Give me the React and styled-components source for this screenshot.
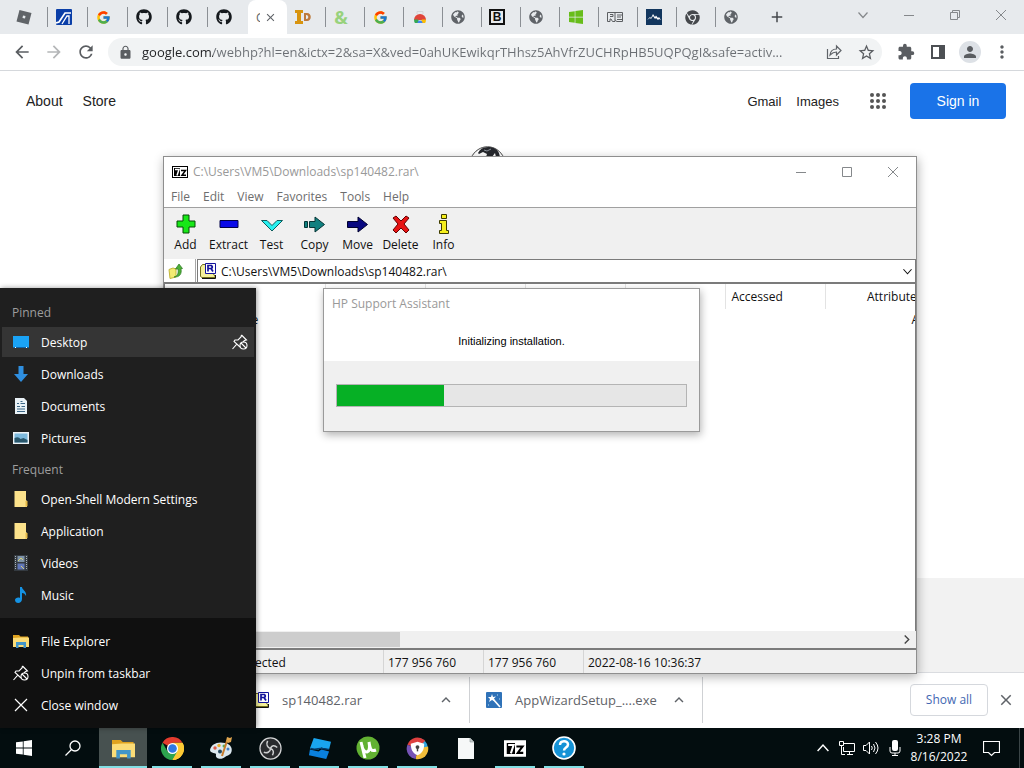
import React from 'react'
import styled, { createGlobalStyle } from 'styled-components'
import { FaGithub, FaChrome, FaWindows, FaGlobeAmericas } from 'react-icons/fa'
import { FcGoogle } from 'react-icons/fc'
import {
    MdArrowBack, MdArrowForward, MdRefresh, MdLock, MdStarBorder, MdExtension,
    MdPerson, MdMoreVert, MdClose, MdAdd, MdExpandLess
} from 'react-icons/md'

const uiFont = '"Open Sans", "Noto Sans", sans-serif'
const arial = '"Liberation Sans", Arial, sans-serif'

const GlobalStyle = createGlobalStyle`
    * {
        box-sizing: border-box;
    }
    body {
        margin: 0;
        font-family: ${uiFont};
        font-size: 12px;
        color: #111;
    }
    button, input, select {
        font: inherit;
        color: inherit;
        margin: 0;
        padding: 0;
        border: 0;
        background: none;
    }
    svg {
        display: block;
        flex: none;
    }
    a {
        color: inherit;
        text-decoration: none;
    }
`

const Screen = styled.div`
    position: relative;
    display: flex;
    flex-direction: column;
    min-height: 100vh;
    overflow: hidden;
    background: #fff;
`

/* ---------- browser ---------- */

const Browser = styled.div`
    flex: 1;
    display: flex;
    flex-direction: column;
`

const TabStrip = styled.div`
    display: flex;
    height: 34px;
    padding-left: 8px;
    background: #e7eaed;
`

const Tab = styled.button`
    display: flex;
    align-items: center;
    gap: ${p => (p.$active ? 4 : 6)}px;
    width: ${p => (p.$wide ? 40 : 39)}px;
    overflow: hidden;
    color: #5f6368;
    background: ${p => (p.$active ? '#fff' : 'none')};
    border-radius: ${p => (p.$active ? '8px 8px 0 0' : '0')};

    &::after {
        content: '';
        width: 1px;
        height: 20px;
        margin-left: auto;
        background: ${p => (p.$divider ? '#8b8f94' : 'transparent')};
    }
    & > svg:first-child {
        margin-left: 8px;
    }
`

const ClippedTitle = styled.span`
    width: 4px;
    margin-left: 8px;
    overflow: hidden;
    white-space: nowrap;
`

const NewTab = styled.button`
    width: 44px;
    display: flex;
    align-items: center;
    justify-content: center;
    color: #45484c;
`

const CaptionButtons = styled.div`
    display: flex;
    margin-left: auto;
    color: #85888b;
`

const CaptionButton = styled.button`
    display: flex;
    align-items: center;
    justify-content: center;
    width: 46px;
    height: 29px;
`

const Toolbar = styled.div`
    display: flex;
    align-items: center;
    height: 37px;
    padding: 0 6px;
    border-bottom: 1px solid #d5d8dc;
    background: #fff;
    color: #5a5d61;
`

const ToolButton = styled.button`
    display: flex;
    align-items: center;
    justify-content: center;
    width: 32px;
    height: 28px;
    opacity: ${p => (p.disabled ? 0.45 : 1)};
`

const Omnibox = styled.label`
    flex: 1;
    display: flex;
    align-items: center;
    min-width: 0;
    height: 28px;
    margin: 0 8px 0 6px;
    padding-left: 10px;
    border-radius: 14px;
    background: #f1f3f4;
`

const Address = styled.input`
    flex: 1;
    min-width: 0;
    margin-left: 9px;
    font-size: 13px;
    outline: 0;
    color: transparent;
    background: linear-gradient(90deg, #202124 71px, #6b6f74 71px);
    background-clip: text;
    text-overflow: ellipsis;
`

const Avatar = styled.span`
    display: flex;
    align-items: center;
    justify-content: center;
    width: 22px;
    height: 22px;
    border-radius: 50%;
    background: #dde1e6;
`

const Page = styled.main`
    flex: 1;
    display: flex;
    flex-direction: column;
    justify-content: space-between;
    font-family: ${arial};
    font-size: 14px;
    color: #222;
`

const PageNav = styled.nav`
    display: flex;
    align-items: center;
    gap: 20px;
    padding: 12px 18px 0 26px;
`

const NavRight = styled.div`
    display: flex;
    align-items: center;
    gap: 15px;
    margin-left: auto;
    font-size: 13px;
`

const AppsButton = styled.button`
    margin: 0 8px 0 15px;
`

const SignIn = styled.a`
    min-width: 96px;
    text-align: center;
    line-height: 36px;
    border-radius: 4px;
    background: #1a73e8;
    color: #fff;
    font-size: 14px;
`

const Doodle = styled.svg`
    position: absolute;
    left: 470px;
    top: 146px;
`

const PageFooter = styled.footer`
    height: 94px;
    background: #f2f2f2;
`

const Downloads = styled.div`
    display: flex;
    align-items: center;
    height: 56px;
    padding: 0 9px 2px 237px;
    border-top: 1px solid #dadce0;
    background: #fff;
    font-size: 13px;
    color: #5f6368;
`

const DownloadItem = styled.button`
    display: flex;
    align-items: center;
    width: 233px;
    height: 46px;
    padding: 0 14px 0 16px;
    border-right: 1px solid #cfd1d4;
`

const DownloadName = styled.span`
    margin: 0 auto 0 13px;
`

const ShowAll = styled.button`
    width: 78px;
    height: 32px;
    margin-left: auto;
    border: 1px solid #d5d8dd;
    border-radius: 4px;
    font-size: 12px;
    font-weight: 500;
    color: #4267b2;
`

const CloseBar = styled.button`
    margin-left: 9px;
`

/* ---------- archive window ---------- */

const ArchiveWindow = styled.section`
    position: absolute;
    left: 163px;
    top: 156px;
    width: 754px;
    height: 518px;
    display: flex;
    flex-direction: column;
    border: 1px solid #8e8e8e;
    background: #fff;
    box-shadow: 1px 3px 10px rgba(0, 0, 0, 0.3);
`

const TitleBar = styled.header`
    display: flex;
    align-items: center;
    height: 29px;
    padding-left: 8px;
    color: #999;
`

const TitleText = styled.span`
    margin-left: 5px;
`

const MenuBar = styled.div`
    display: flex;
    gap: 13px;
    height: 22px;
    padding-left: 7px;
    border-bottom: 1px solid #a0a0a0;
    color: #6d6d6d;
    line-height: 22px;
`

const ActionBar = styled.div`
    display: flex;
    height: 51px;
    background: #f0f0f0;
`

const Action = styled.button`
    display: flex;
    flex-direction: column;
    align-items: center;
    gap: 1px;
    width: 43px;
    padding-top: 6px;
    line-height: 18px;
`

const PathRow = styled.div`
    display: flex;
    height: 25px;
    border-bottom: 2px solid #7b7b7b;
`

const UpButton = styled.button`
    display: flex;
    align-items: center;
    width: 32px;
    padding-left: 4px;
    border-right: 1px solid #a8a8a8;
`

const PathBox = styled.div`
    flex: 1;
    display: flex;
    align-items: center;
    margin-left: 1px;
    padding: 0 3px 0 2px;
    border: 1px solid #7b7b7b;
    border-bottom: 0;
`

const PathSelect = styled.select`
    flex: 1;
    margin-left: 5px;
    appearance: none;
    outline: 0;
`

const ListArea = styled.div`
    flex: 1;
    overflow: hidden;
    border-left: 1px solid #7b7b7b;
    border-right: 1px solid #7b7b7b;
`

const FileTable = styled.table`
    width: 760px;
    table-layout: fixed;
    border-collapse: collapse;

    th, td {
        padding: 0 6px;
        text-align: left;
        font-weight: 400;
        white-space: nowrap;
    }
    th {
        height: 25px;
        border-right: 1px solid #e3e3e3;
    }
    td {
        height: 20px;
    }
    td:first-child {
        padding-left: 0;
    }
    th:last-child, td:last-child {
        text-align: right;
    }
    th:last-child {
        padding-right: 2px;
    }
`

const FileName = styled.span`
    display: flex;
    align-items: center;
`

const ScrollTrack = styled.div`
    display: flex;
    justify-content: space-between;
    align-items: center;
    height: 17px;
    padding-right: 5px;
    background: #f0f0f0;
    color: #444;
`

const ScrollThumb = styled.div`
    width: 236px;
    height: 15px;
    background: #cdcdcd;
`

const StatusBar = styled.footer`
    display: flex;
    height: 25px;
    border-top: 2px solid #7b7b7b;
    background: #f0f0f0;
    line-height: 25px;
`

const StatusCell = styled.span`
    width: ${p => p.$width || 100}px;
    padding-left: 4px;
    border-right: ${p => (p.$last ? '0' : '1px solid #d5d5d5')};
    white-space: nowrap;
`

/* ---------- installer dialog ---------- */

const Dialog = styled.section`
    position: absolute;
    left: 323px;
    top: 288px;
    width: 377px;
    height: 144px;
    display: flex;
    flex-direction: column;
    border: 1px solid #9a9a9a;
    background: #f0f0f0;
    box-shadow: 1px 3px 8px rgba(0, 0, 0, 0.3);
`

const DialogTop = styled.div`
    height: 72px;
    background: #fff;
`

const DialogTitle = styled.h2`
    margin: 0;
    padding-left: 8px;
    font-size: 12px;
    font-weight: 400;
    line-height: 30px;
    color: #999;
`

const DialogMessage = styled.label`
    display: block;
    text-align: center;
    font-family: ${arial};
    font-size: 11px;
    line-height: 44px;
    color: #000;
`

const Progress = styled.progress`
    appearance: none;
    width: calc(100% - 24px);
    height: 23px;
    margin: 23px 12px 0;
    border: 1px solid #b4b4b4;

    &::-webkit-progress-bar {
        background: #e6e6e6;
    }
    &::-webkit-progress-value {
        background: #06b025;
    }
`

/* ---------- jump list ---------- */

const JumpList = styled.aside`
    position: absolute;
    left: 0;
    bottom: 40px;
    width: 256px;
    background: #1f1f1f;
    color: #fff;
    box-shadow: 1px 0 5px rgba(0, 0, 0, 0.4);
`

const JumpSection = styled.div`
    padding: 8px 2px 6px;
    background: ${p => (p.$tasks ? '#101010' : 'none')};
`

const JumpLabel = styled.div`
    height: 28px;
    margin-top: 3px;
    padding-left: 10px;
    line-height: 28px;
    color: #9d9d9d;
`

const JumpRow = styled.div`
    display: flex;
    align-items: center;
    height: 30px;
    margin-bottom: 2px;
    background: ${p => (p.$hot ? '#353535' : 'none')};
`

const JumpLink = styled.button`
    flex: 1;
    display: flex;
    align-items: center;
    gap: 12px;
    height: 30px;
    padding-left: 11px;
    text-align: left;
`

const PinButton = styled.button`
    padding: 0 6px;
`

/* ---------- taskbar ---------- */

const Taskbar = styled.footer`
    display: flex;
    height: 40px;
    background: #030d0f;
    color: #fff;
`

const TaskButtons = styled.div`
    display: flex;
    gap: 1px;
`

const RunningApps = styled.div`
    display: flex;
    gap: 1px;
    margin-left: 1px;
`

const TaskButton = styled.button`
    display: flex;
    align-items: center;
    justify-content: center;
    width: 48px;
    height: 40px;
    background: ${p => (p.$active ? '#475150' : 'none')};
    background-image: ${p => (p.$running ? 'linear-gradient(#82dfe4, #82dfe4)' : 'none')};
    background-size: ${p => (p.$active ? '48px' : '40px')} 2px;
    background-position: center bottom;
    background-repeat: no-repeat;
`

const Tray = styled.div`
    display: flex;
    align-items: center;
    margin-left: auto;
    padding-right: 4px;
`

const TrayButton = styled.button`
    display: flex;
    align-items: center;
    justify-content: center;
    width: 24px;
    height: 40px;
`

const Clock = styled.time`
    width: 64px;
    text-align: center;
    line-height: 18px;
`

const NoticeButton = styled(TrayButton)`
    width: 49px;
    padding-right: 8px;
    border-right: 1px solid #3b4547;
`

/* ---------- drawings ---------- */

const Svg = ({ size = 16, w, h, box = '0 0 16 16', children, ...rest }) => (
    <svg width={w || size} height={h || size} viewBox={box} fill="none" aria-hidden="true" {...rest}>{children}</svg>
)

const RobloxIcon = () => (
    <Svg><path fill="#606468" fillRule="evenodd" d="M3.500 1 15.500 4 12.500 15.500.5 12.500ZM7 6.500 6.500 9 9 9.500 9.500 7Z" /></Svg>
)

const BlueIcon = () => (
    <Svg>
        <rect width="16" height="16" rx="1" fill="#0b3fa8" />
        <path d="M0 14 3 13 9 4h6" stroke="#fff" strokeWidth="1.700" />
        <path d="m6 15 5-8h2v8" stroke="#fff" strokeWidth="1.300" />
    </Svg>
)

const InfoDIcon = () => (
    <Svg>
        <path d="M0 1h8v3H6v8h2v3H0v-3h2V4H0Z" fill="#d8940f" />
        <path d="M9 4h3c5 0 5 8 0 8H9ZM11 6v4c3 .5 3-4.500 0-4Z" fill="#bd7a3c" fillRule="evenodd" />
    </Svg>
)

const Ampersand = styled.span`
    width: 16px;
    margin-left: 7px;
    font: 700 18px/20px ${uiFont};
    color: #98d27c;
`

const StoreIcon = () => (
    <Svg>
        <path d="M5 5V2.500h6V5" stroke="#d4d6d8" />
        <path d="M2 11a6 6 0 0 1 12 0Z" fill="#e0453a" />
        <path d="M2 10.500h4l2 3.500H3Q2 13 2 10.500Z" fill="#34a853" />
        <path d="M14 10.500h-4L8 14h5q1-1 1-3.500Z" fill="#fbbc05" />
        <path d="M5.500 14a2.500 2.500 0 0 1 5 0Z" fill="#4285f4" />
    </Svg>
)

const BoldBox = styled.span`
    width: 16px;
    height: 16px;
    margin-left: 7px;
    border: 2px solid #111;
    font: 700 12px/12px ${arial};
    text-align: center;
    color: #111;
`

const ReIcon = () => (
    <Svg>
        <path d="M.5 3.500h15v9H9.500L8 10.500v2H5.500L4 10H3v2.500H.5ZM3 5.500h3v2H3M8 3.500v7M10 6h5M10 8h4M10 10.500h5" stroke="#5c5f62" />
    </Svg>
)

const MountainIcon = () => (
    <Svg>
        <rect width="16" height="16" fill="#12365e" />
        <path d="m1 11 3-3 1 1 2-4 2 3 1-1.500L12 9l1-1 2 3-2-1-1 1-2-2-1 1-2-3-2 3-1-1Z" fill="#fff" />
    </Svg>
)

const ShareIcon = () => (
    <Svg><path d="M1.500 5v9.500h11V12M4 11c.5-4 3-6 6.500-6V2l4.500 4.500L10.500 11V8C8 8 6 9 4 11Z" stroke="#5f6368" strokeWidth="1.200" /></Svg>
)

const PanelIcon = () => (
    <Svg><path fill="#4d5054" fillRule="evenodd" d="M1 1h14v14H1ZM3 3v10h6V3Z" /></Svg>
)

const GridDots = () => (
    <Svg size={18} box="0 0 18 18">
        {[3, 9, 15].map(y => [3, 9, 15].map(x => <circle key={`${x}-${y}`} cx={x} cy={y} r="2" fill="#555" />))}
    </Svg>
)

const MinimizeIcon = () => <Svg size={10} box="0 0 10 10"><path d="M0 5.500h10" stroke="currentColor" /></Svg>
const MaximizeIcon = () => <Svg size={10} box="0 0 10 10"><path d="M.5.5h9v9h-9Z" stroke="currentColor" /></Svg>
const RestoreIcon = () => <Svg size={10} box="0 0 10 10"><path d="M.5 2.500h7v7h-7ZM2.500 2.500v-2h7v7h-2" stroke="currentColor" /></Svg>
const CrossIcon = ({ size = 10 }) => <Svg size={size} box="0 0 10 10"><path d="m0 0 10 10M10 0 0 10" stroke="currentColor" /></Svg>
const ChevronIcon = ({ up, size = 10 }) => (
    <Svg size={size} box="0 0 10 10"><path d={up ? 'm.5 7.500 4.500-5 4.500 5' : 'm.5 2.500 4.500 5 4.500-5'} stroke="currentColor" strokeWidth="1.200" /></Svg>
)

const SevenZipIcon = ({ dark, w = 16, h = 12 }) => (
    <Svg w={w} h={h} box="0 0 16 12">
        <rect x=".5" y=".5" width="15" height="11" fill="#fff" stroke={dark ? '#fff' : '#000'} />
        <path d="M2 2h6v8H2Z" fill="#000" />
        <path d="M3 3.500h4L5 9.500" stroke="#fff" strokeWidth="1.500" />
        <path d="M9 4.500h4.500L10 9.200h4" stroke="#000" strokeWidth="1.500" />
    </Svg>
)

const RarIcon = () => (
    <Svg>
        <path d="M.5 13.500V4l2-2.500H8L15 13.500v1H2Z" fill="#f5f19c" stroke="#716f1b" />
        <path d="M2 15.500h13.500V12" stroke="#111" />
        <path d="M5.500.5h10v10h-10Z" fill="#fff" stroke="#14149c" />
        <path d="M8 8.500v-6h3.500q1.500 1.500 0 3H8M11 5.500l2 3" stroke="#14149c" strokeWidth="1.700" />
    </Svg>
)

const UpFolderIcon = () => (
    <Svg>
        <path d="M1 6.500 5 5l3 1v8l-6 1.500Z" fill="#f3eb72" stroke="#c2b73c" />
        <path d="M6 14c4-1 4.500-4 4-8H7.500L11 1l3.500 4.500H13c1 5-1 9-7 8.500Z" fill="#4dae38" stroke="#2b7a20" strokeWidth=".7" />
    </Svg>
)

const actionIcons = {
    Add: <path d="M9 1h6v6h6v6h-6v6H9v-6H3V7h6Z" fill="#17e817" stroke="#064b06" />,
    Extract: <path d="M3 6.500h18v7H3Z" fill="#0a0ae8" stroke="#000048" />,
    Test: <path d="M1.500 6.500H7l5 5 5-5h5.500L12 17Z" fill="#27f0f0" stroke="#0b5c5c" />,
    Copy: <path d="M1.500 7.500h3v6h-3ZM6.500 7.500H12V3l9.500 7.500L12 18v-4.500H6.500Z" fill="#108080" stroke="#053535" />,
    Move: <path d="M1.500 7.500H12V3l9.500 7.500L12 18v-4.500H1.500Z" fill="#080880" stroke="#00002e" />,
    Delete: <path d="m4 4 3-2 5 5 5-5 3 2-5 6 5 6-3 3-5-5-5 5-3-3 5-6Z" fill="#e71313" stroke="#620000" />,
    Info: <path d="M9.500.5h5v4h-5ZM7.500 6.500h7v10h2v3h-9v-3h2v-7h-2Z" fill="#f6ef1d" stroke="#3d3b00" />
}

const DesktopIcon = () => (
    <Svg>
        <path d="M0 2h16v12H0Z" fill="#1aa3f6" />
        <path d="M0 13h16v1H0Z" fill="#0b62a8" />
        <path d="M2 13.500h1M13 13.500h1" stroke="#fff" />
    </Svg>
)
const DownIcon = () => <Svg><path d="M5.500 0h5v8H15l-7 8-7-8h4.500Z" fill="#2f8fe0" /></Svg>
const DocumentIcon = () => (
    <Svg>
        <path d="M2 0h9l3 3v13H2Z" fill="#e9f1f6" />
        <path d="M4 5.500h2M7.500 3.500h2M7.500 5.500H12M4 8.500h3M8.500 8.500H12M4 11h8M4 13.500h8" stroke="#3b6685" />
    </Svg>
)
const PictureIcon = () => (
    <Svg>
        <path d="M0 2h16v12H0Z" fill="#edf2f5" />
        <path d="M1.500 3.500h13v9h-13Z" fill="#7db9dd" />
        <path d="M1.500 8q4-2 6 1l3-1 4 2v2.500h-13Z" fill="#29566b" />
    </Svg>
)
const FolderIcon = () => (
    <Svg>
        <path d="M1.500 0H13v9l1 1v6H1.500Z" fill="#fce28b" />
        <path d="M12.500 10h2v5l-2 1Z" fill="#e5b946" />
    </Svg>
)
const VideoIcon = () => (
    <Svg>
        <path d="M1 0h14v16H1Z" fill="#343a40" />
        <path d="M2.500 1v14M13.500 1v14" stroke="#aab3ba" strokeDasharray="1 1" />
        <path d="M4.500 1h7v6h-7Z" fill="#7e93a8" />
        <path d="M4.500 8.500h7v6h-7Z" fill="#6177b8" />
        <path d="M5 6l3-3 2 2M8 11l3 3" stroke="#d6cf76" />
    </Svg>
)
const MusicIcon = () => (
    <Svg><path d="M7 0h2c0 3 5 4 4 9-1-2-2-3-4-3v6c0 5-7 5-7 1 0-2 3-3 5-2Z" fill="#1593e4" /></Svg>
)
const ExplorerIcon = ({ size = 16 }) => (
    <Svg size={size}>
        <path d="M0 2h6l1.500 1.500H15V6H0Z" fill="#dfa21f" />
        <path d="M0 5 7 4.500h9V14H0Z" fill="#fbdc77" />
        <path d="M3 9h10v6h-2.500v-3h-5v3H3Z" fill="#4295c8" />
    </Svg>
)
const UnpinIcon = () => (
    <Svg>
        <path d="m9.500 1 5 5-2 .5-1.500 1.500M9.500 1 9 3 6 6 3 6l-1 1.500L8 13M4.800 10.200.5 15" stroke="#fff" strokeWidth="1.100" />
        <circle cx="11.500" cy="11.500" r="3.500" stroke="#fff" strokeWidth="1.100" />
        <path d="m9 9 5 5" stroke="#fff" strokeWidth="1.100" />
    </Svg>
)

const WizardIcon = () => (
    <Svg>
        <rect width="16" height="16" rx="1" fill="#2f72b8" />
        <path d="m7 7 7 8" stroke="#fff" strokeWidth="1.700" />
        <path d="m6 2 1 3 3-.5-2 2 1 3-3-1.500L3 10l1-3-2-2h3Z" fill="#fff" />
        <path d="M11 3h1M13 7h1M2 13h1" stroke="#bde" />
    </Svg>
)

const SearchIcon = () => (
    <Svg><circle cx="10" cy="6" r="5" stroke="#fff" strokeWidth="1.300" /><path d="M6.500 9.500.5 15.500" stroke="#fff" strokeWidth="1.300" /></Svg>
)
const WindowsIcon = () => (
    <Svg><path fill="#fff" d="M0 2.300 6.800 1.400v6.200H0ZM7.600 1.300 16 0v7.600H7.600ZM0 8.400h6.800v6.200L0 13.700ZM7.600 8.400H16V16l-8.400-1.300Z" /></Svg>
)
const ChromeIcon = () => (
    <Svg size={23} box="0 0 24 24">
        <path d="M12 12 1.600 6A12 12 0 0 1 22.400 6H12Z" fill="#e33b2e" />
        <path d="M12 12 22.400 6A12 12 0 0 1 12 24Z" fill="#fcc934" />
        <path d="M17.200 15 12 24A12 12 0 0 1 1.600 6L6.800 15Z" fill="#2da44e" />
        <path d="M12 6h10.400A12 12 0 0 1 12 24l5.200-9Z" fill="#fcc934" />
        <circle cx="12" cy="12" r="5.800" fill="#fff" />
        <circle cx="12" cy="12" r="4.500" fill="#2f78e4" />
    </Svg>
)
const PaintIcon = () => (
    <Svg size={24} box="0 0 24 24">
        <path d="M1 14C2 8 9 5 16 7c6 1 8 6 6 10-2 3-4 2-6 4-3 3-10 2-9-2 1-3-6-1-6-5Z" fill="#dce8ef" />
        <circle cx="6" cy="12" r="1.700" fill="#de5c48" /><circle cx="10" cy="9.500" r="1.700" fill="#e9b033" />
        <circle cx="15" cy="10" r="1.500" fill="#54ad59" /><circle cx="19" cy="13" r="1.500" fill="#4381c9" />
        <circle cx="11" cy="15.500" r="2" fill="#26495e" />
        <path d="m13 20 5-15" stroke="#c87c2c" strokeWidth="2" />
        <path d="m17 5 1-4 3 1 2-1-1 5-3 1Z" fill="#e0a64f" />
    </Svg>
)
const ObsIcon = () => (
    <Svg size={23} box="0 0 24 24">
        <circle cx="12" cy="12" r="11" fill="#292b2e" stroke="#d2d3d4" strokeWidth="1.300" />
        <path d="M9 4c-2 4 0 7 3 8 1-3 4-4 7-1M12 12c0 4-4 5-7 4M12 12c3 1 4 4 2 7" stroke="#cccecf" strokeWidth="1.600" />
    </Svg>
)
const RobloxStudioIcon = () => (
    <Svg size={23} box="0 0 24 24">
        <path d="M6 1 24 5l-2 8-8-2-3 2-9-1Z" fill="#19a5ef" />
        <path d="m2 13 9 2 3-2 8 2-3 8-18-4Z" fill="#0a80dd" />
        <path d="M3 12c6 2 8-1 11 0l8 1" stroke="#053d6e" strokeWidth="1.400" />
    </Svg>
)
const TorrentIcon = () => (
    <Svg size={24} box="0 0 24 24">
        <circle cx="12" cy="12" r="11.500" fill="#62b132" />
        <path d="m5 6 4 16M6 10c1 5 3 6 5 6 3-1 3-4 2-10M13 6c1 7 2 10 7 8" stroke="#fff" strokeWidth="3" />
    </Svg>
)
const ShieldIcon = () => (
    <Svg size={23} box="0 0 24 24">
        <path d="M12 1A11 11 0 0 1 23 12H12Z" fill="#32a4df" />
        <path d="M1.500 8A11 11 0 0 1 20 4L12 12Z" fill="#de403f" />
        <path d="M23 10A11 11 0 0 1 10 23l2-11Z" fill="#f2bd3a" />
        <path d="M10 23A11 11 0 0 1 1.500 8L12 12Z" fill="#7653b5" />
        <path d="m12 5 7 2c0 6-2 10-7 12-5-2-7-6-7-12Z" fill="#fff" />
        <circle cx="12" cy="10.500" r="2" fill="#444" /><path d="M12 11v4" stroke="#444" strokeWidth="1.500" />
    </Svg>
)
const BlankFileIcon = () => (
    <Svg w={16} h={21} box="0 0 16 21">
        <path d="M0 0h12l4 4v17H0Z" fill="#f6f8f8" /><path d="M12 0v4h4" fill="#c4cbcc" stroke="#8b9394" strokeWidth=".6" />
    </Svg>
)
const HelpIcon = () => (
    <Svg size={24} box="0 0 24 24">
        <circle cx="12" cy="12" r="11" fill="#1592d6" stroke="#fff" strokeWidth="1.600" />
        <path d="M8 9c0-5 8-5 8-.5 0 3-4 3-4 6" stroke="#fff" strokeWidth="2.500" /><circle cx="12" cy="18" r="1.600" fill="#fff" />
    </Svg>
)

const NetworkIcon = () => (
    <Svg><path d="M5 3.500h10.500v8H4.500V7M8 14.500h6M10.500 11.500v3M.5 1.500h4v4h-4ZM2.500 5.500v9H6" stroke="#fff" /></Svg>
)
const SoundIcon = () => (
    <Svg><path d="M.5 5.500H3L6.500 2v12L3 10.500H.5ZM8.500 6q1.500 2 0 4M10.500 4q3 4 0 8M12.500 2q5 6 0 12" stroke="#fff" /></Svg>
)
const MicIcon = () => (
    <Svg><rect x="5" width="6" height="11" rx="2" fill="#fff" /><path d="M3 7v4q0 2 2 2h6q2 0 2-2V7M8 13v3M5 15.500h6" stroke="#fff" /></Svg>
)
const NoticeIcon = () => (
    <Svg size={17} box="0 0 17 17"><path d="M.5 1.500h16v11h-5l-3 3-3-3h-5Z" stroke="#fff" strokeWidth="1.200" /></Svg>
)

/* ---------- data ---------- */

const octocat = <FaGithub size={16} color="#15191d" />
const globe = <FaGlobeAmericas size={14} />

const firstTabs = [
    ['Roblox', <RobloxIcon />], ['Dashboard', <BlueIcon />], ['Google', <FcGoogle size={15} />],
    ['GitHub', octocat], ['GitHub', octocat], ['GitHub', octocat]
]

const lastTabs = [
    ['Icons', <InfoDIcon />], ['Ampersand', <Ampersand>&amp;</Ampersand>], ['Google', <FcGoogle size={15} />],
    ['Web Store', <StoreIcon />], ['Site', globe], ['Bold', <BoldBox>B</BoldBox>], ['Site', globe],
    ['Windows', <FaWindows size={16} color="#67bd1a" />], ['RE', <ReIcon />], ['Mountain', <MountainIcon />],
    ['Chrome', <FaChrome size={15} color="#45484c" />], ['Site', globe]
]

const menus = ['File', 'Edit', 'View', 'Favorites', 'Tools', 'Help']

// the columns behind the installer dialog keep their label for screen readers only
const columns = [
    ['Name', false], ['Size', false], ['Packed Size', false], ['Modified', false],
    ['Created', false], ['Accessed', true], ['Attributes', true]
]

const pinned = [['Desktop', <DesktopIcon />], ['Downloads', <DownIcon />], ['Documents', <DocumentIcon />], ['Pictures', <PictureIcon />]]
const frequent = [['Open-Shell Modern Settings', <FolderIcon />], ['Application', <FolderIcon />], ['Videos', <VideoIcon />], ['Music', <MusicIcon />]]
const tasks = [['File Explorer', <ExplorerIcon />], ['Unpin from taskbar', <UnpinIcon />], ['Close window', <Svg><path d="m2 2 12 12M14 2 2 14" stroke="#fff" strokeWidth="1.200" /></Svg>]]

const apps = [
    ['File Explorer', <ExplorerIcon size={23} />, true], ['Google Chrome', <ChromeIcon />, true],
    ['Paint', <PaintIcon />, true], ['OBS Studio', <ObsIcon />, true], ['Roblox Studio', <RobloxStudioIcon />, true],
    ['uTorrent', <TorrentIcon />, true], ['Secure Browser', <ShieldIcon />, true], ['File', <BlankFileIcon />, false],
    ['7-Zip', <SevenZipIcon dark w={22} h={17} />, true], ['Help', <HelpIcon />, true]
]

function BrowserWindow() {
    return (
        <Browser>
            <TabStrip>
                {firstTabs.map(([name, icon], i) => (
                    <Tab key={i} aria-label={name} $wide $divider={i < 5}>{icon}</Tab>
                ))}
                <Tab $active aria-label="Google">
                    <ClippedTitle>G</ClippedTitle>
                    <MdClose size={13} />
                </Tab>
                {lastTabs.map(([name, icon], i) => (
                    <Tab key={i} aria-label={name} $divider={i < 11}>{icon}</Tab>
                ))}
                <NewTab aria-label="New tab"><MdAdd size={18} /></NewTab>
                <CaptionButtons>
                    <CaptionButton aria-label="Search tabs"><ChevronIcon /></CaptionButton>
                    <CaptionButton aria-label="Minimize"><MinimizeIcon /></CaptionButton>
                    <CaptionButton aria-label="Restore"><RestoreIcon /></CaptionButton>
                    <CaptionButton aria-label="Close"><CrossIcon /></CaptionButton>
                </CaptionButtons>
            </TabStrip>
            <Toolbar>
                <ToolButton aria-label="Back"><MdArrowBack size={20} /></ToolButton>
                <ToolButton aria-label="Forward" disabled><MdArrowForward size={20} /></ToolButton>
                <ToolButton aria-label="Reload"><MdRefresh size={20} /></ToolButton>
                <Omnibox>
                    <MdLock size={15} />
                    <Address
                        aria-label="Address"
                        defaultValue="google.com/webhp?hl=en&ictx=2&sa=X&ved=0ahUKEwikqrTHhsz5AhVfrZUCHRpHB5UQPQgI&safe=activ..."
                    />
                    <ToolButton aria-label="Share"><ShareIcon /></ToolButton>
                    <ToolButton aria-label="Bookmark"><MdStarBorder size={19} /></ToolButton>
                </Omnibox>
                <ToolButton aria-label="Extensions"><MdExtension size={18} /></ToolButton>
                <ToolButton aria-label="Side panel"><PanelIcon /></ToolButton>
                <ToolButton aria-label="Profile"><Avatar><MdPerson size={18} /></Avatar></ToolButton>
                <ToolButton aria-label="Menu"><MdMoreVert size={20} /></ToolButton>
            </Toolbar>
            <Page>
                <PageNav>
                    <a href="#about">About</a>
                    <a href="#store">Store</a>
                    <NavRight>
                        <a href="#gmail">Gmail</a>
                        <a href="#images">Images</a>
                        <AppsButton aria-label="Google apps"><GridDots /></AppsButton>
                        <SignIn href="#signin">Sign in</SignIn>
                    </NavRight>
                </PageNav>
                <PageFooter />
            </Page>
            <Doodle width="36" height="20" viewBox="0 0 36 20" aria-hidden="true">
                <path d="M1 12C8-3 27-3 34 12" fill="#fff" stroke="#444" />
                <path d="M8 7Q11 0 20 1q9 1 10 10h-4l-1-4-3 4h-6l1-3-4-2-4 2Z" fill="#26282d" />
                <path d="m14 4 3 1 4-2" stroke="#8b9199" fill="none" />
            </Doodle>
            <Downloads>
                <DownloadItem>
                    <RarIcon />
                    <DownloadName>sp140482.rar</DownloadName>
                    <MdExpandLess size={18} />
                </DownloadItem>
                <DownloadItem>
                    <WizardIcon />
                    <DownloadName>AppWizardSetup_....exe</DownloadName>
                    <MdExpandLess size={18} />
                </DownloadItem>
                <ShowAll>Show all</ShowAll>
                <CloseBar aria-label="Close downloads bar"><MdClose size={18} /></CloseBar>
            </Downloads>
        </Browser>
    )
}

function Archive() {
    return (
        <ArchiveWindow>
            <TitleBar>
                <SevenZipIcon />
                <TitleText>C:\Users\VM5\Downloads\sp140482.rar\</TitleText>
                <CaptionButtons>
                    <CaptionButton aria-label="Minimize"><MinimizeIcon /></CaptionButton>
                    <CaptionButton aria-label="Maximize"><MaximizeIcon /></CaptionButton>
                    <CaptionButton aria-label="Close"><CrossIcon /></CaptionButton>
                </CaptionButtons>
            </TitleBar>
            <MenuBar>
                {menus.map(name => <button key={name}>{name}</button>)}
            </MenuBar>
            <ActionBar>
                {Object.keys(actionIcons).map(name => (
                    <Action key={name}>
                        <Svg w={24} h={21} box="0 0 24 21">{actionIcons[name]}</Svg>
                        {name}
                    </Action>
                ))}
            </ActionBar>
            <PathRow>
                <UpButton aria-label="Up one level"><UpFolderIcon /></UpButton>
                <PathBox>
                    <RarIcon />
                    <PathSelect aria-label="Folder">
                        <option>C:\Users\VM5\Downloads\sp140482.rar\</option>
                    </PathSelect>
                    <ChevronIcon size={9} />
                </PathBox>
            </PathRow>
            <ListArea>
                <FileTable>
                    <colgroup>
                        <col width="160" />
                        {columns.slice(1).map(([name]) => <col key={name} width="100" />)}
                    </colgroup>
                    <thead>
                        <tr>
                            {columns.map(([name, shown]) => <th key={name} aria-label={name}>{shown && name}</th>)}
                        </tr>
                    </thead>
                    <tbody>
                        <tr>
                            <td><FileName><Svg><path d="M1 3h14v10H1Z" fill="#fff" stroke="#777" /></Svg>sp140482.exe</FileName></td>
                            <td /><td /><td /><td /><td />
                            <td>A</td>
                        </tr>
                    </tbody>
                </FileTable>
            </ListArea>
            <ScrollTrack>
                <ScrollThumb />
                <Svg size={9} box="0 0 10 10"><path d="m3 .5 4.500 4.500L3 9.500" stroke="currentColor" strokeWidth="1.500" /></Svg>
            </ScrollTrack>
            <StatusBar>
                <StatusCell $width={220}>1/1 object(s) selected</StatusCell>
                <StatusCell>177 956 760</StatusCell>
                <StatusCell>177 956 760</StatusCell>
                <StatusCell $last>2022-08-16 10:36:37</StatusCell>
            </StatusBar>
        </ArchiveWindow>
    )
}

function Installer() {
    return (
        <Dialog>
            <DialogTop>
                <DialogTitle>HP Support Assistant</DialogTitle>
                <DialogMessage htmlFor="install-progress">Initializing installation.</DialogMessage>
            </DialogTop>
            <Progress id="install-progress" max="350" value="107" />
        </Dialog>
    )
}

const renderJumpItems = (items) => items.map(([name, icon]) => (
    <JumpRow key={name} $hot={name === 'Desktop'}>
        <JumpLink>{icon}{name}</JumpLink>
        {name === 'Desktop' && <PinButton aria-label="Unpin from this list"><UnpinIcon /></PinButton>}
    </JumpRow>
))

function TaskMenu() {
    return (
        <JumpList>
            <JumpSection>
                <JumpLabel>Pinned</JumpLabel>
                {renderJumpItems(pinned)}
                <JumpLabel>Frequent</JumpLabel>
                {renderJumpItems(frequent)}
            </JumpSection>
            <JumpSection $tasks>{renderJumpItems(tasks)}</JumpSection>
        </JumpList>
    )
}

export default function App() {
    return (
        <Screen>
            <GlobalStyle />
            <BrowserWindow />
            <Archive />
            <Installer />
            <TaskMenu />
            <Taskbar>
                <TaskButtons>
                    <TaskButton aria-label="Start"><WindowsIcon /></TaskButton>
                    <TaskButton aria-label="Search"><SearchIcon /></TaskButton>
                    <RunningApps>
                        {apps.map(([name, icon, running], i) => (
                            <TaskButton key={name} aria-label={name} $running={running} $active={i === 0}>{icon}</TaskButton>
                        ))}
                    </RunningApps>
                </TaskButtons>
                <Tray>
                    <TrayButton aria-label="Show hidden icons"><ChevronIcon up size={12} /></TrayButton>
                    <TrayButton aria-label="Network"><NetworkIcon /></TrayButton>
                    <TrayButton aria-label="Volume"><SoundIcon /></TrayButton>
                    <TrayButton aria-label="Microphone"><MicIcon /></TrayButton>
                    <Clock>3:28 PM<br />8/16/2022</Clock>
                    <NoticeButton aria-label="Notifications"><NoticeIcon /></NoticeButton>
                </Tray>
            </Taskbar>
        </Screen>
    )
}
